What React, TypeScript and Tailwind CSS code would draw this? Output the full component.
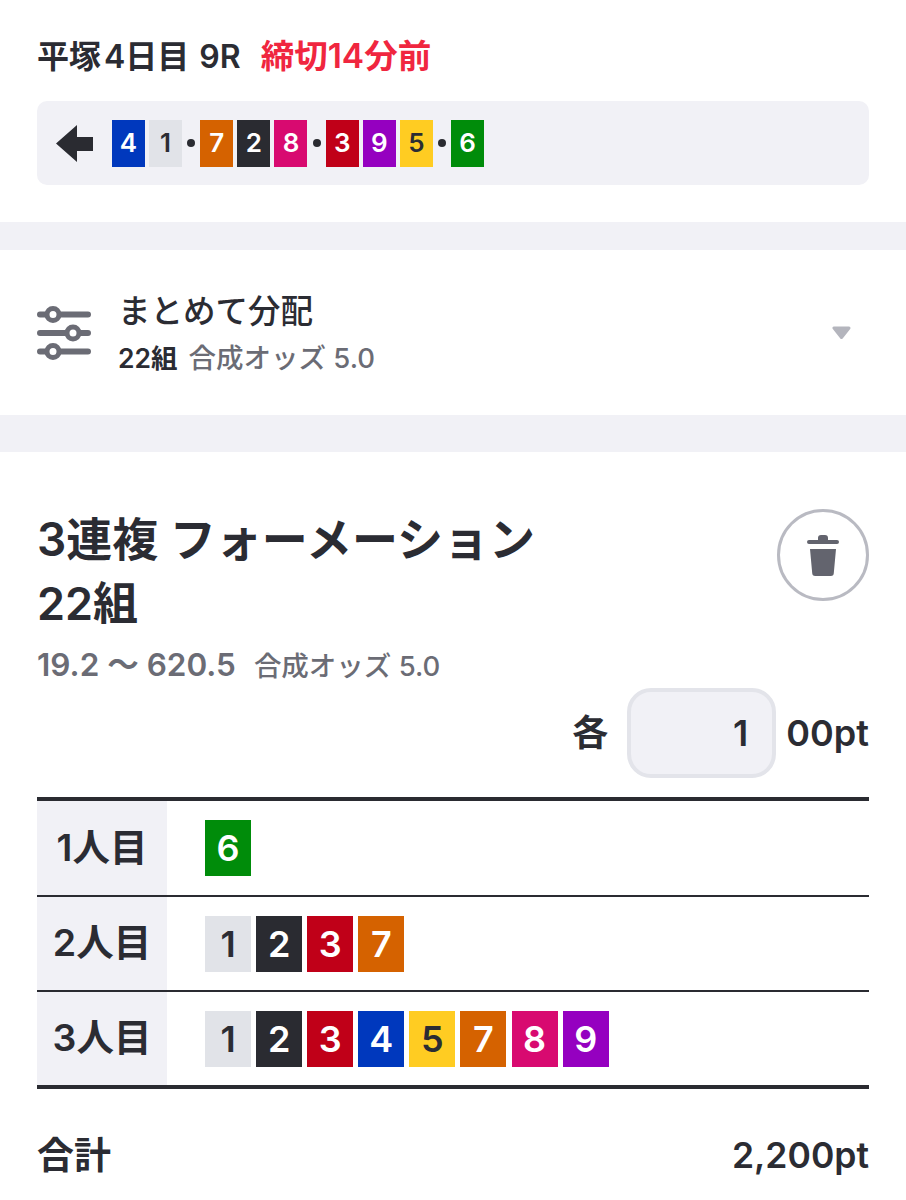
const COLORS: Record<string, string> = {
  "1": "bg-[#e1e3e8] text-[#2b2c33]",
  "2": "bg-[#2a2b31] text-white",
  "3": "bg-[#c00018] text-white",
  "4": "bg-[#0038bd] text-white",
  "5": "bg-[#ffcc22] text-[#2b2c33]",
  "6": "bg-[#008c0a] text-white",
  "7": "bg-[#d56200] text-white",
  "8": "bg-[#d80a70] text-white",
  "9": "bg-[#9500c0] text-white",
};

function SmallBadge({ n }: { n: string }) {
  return (
    <span className={`flex h-[47px] w-[33px] items-center justify-center text-[26px] font-semibold leading-none ${COLORS[n]}`}>
      {n}
    </span>
  );
}

function BigBadge({ n }: { n: string }) {
  return (
    <span className={`flex h-[56px] w-[46px] items-center justify-center text-[36px] font-semibold leading-none ${COLORS[n]}`}>
      {n}
    </span>
  );
}

function Dot() {
  return <span className="mx-[1px] h-[8px] w-[8px] rounded-full bg-[#2a2b31]" />;
}

function Row({ label, nums, tall }: { label: string; nums: string[]; tall?: boolean }) {
  return (
    <div className={`flex ${tall ? "h-[94px]" : "h-[93px]"}`}>
      <div className="flex w-[130px] items-center justify-center bg-[#f1f1f6] text-[37.500px] font-semibold text-[#2b2c33]">
        {label}
      </div>
      <div className="flex flex-1 items-center gap-[5.100px] pl-[38px]">
        {nums.map((n) => (
          <BigBadge key={n} n={n} />
        ))}
      </div>
    </div>
  );
}

function SlidersIcon() {
  return (
    <svg width="54" height="54" viewBox="0 0 54 54" className="text-[#6b6c75]">
      <path d="M3 8.500h48M3 27h48M3 45.500h48" fill="none" stroke="currentColor" strokeWidth="6" strokeLinecap="round" />
      <g fill="#fff" stroke="currentColor" strokeWidth="5">
        <circle cx="16" cy="8.500" r="6" />
        <circle cx="36" cy="27" r="6" />
        <circle cx="16" cy="45.500" r="6" />
      </g>
    </svg>
  );
}

export default function App() {
  return (
    <div className="h-[1200px] w-[906px] overflow-hidden bg-white text-[#2b2c33] font-['Inter','Noto_Sans_CJK_JP',sans-serif]">
      <div className="px-[37px]">
        <div className="flex h-[101px] items-center pt-[12px] text-[32px] font-semibold leading-none">
          <span>平塚</span>
          <span className="ml-[3px]">4日目</span>
          <span className="ml-[10px]">9R</span>
          <span className="ml-[20px] text-[33.500px] text-[#f0263f]">締切14分前</span>
        </div>
        <div className="flex h-[84px] items-center rounded-[10px] bg-[#f1f1f6] pl-[19px]">
          <svg width="37" height="37" viewBox="0 0 37 37" className="mr-[19px]">
            <path d="M0 18.500 21 0V12H37V26H21V37Z" fill="#2a2b31" />
          </svg>
          <div className="flex items-center gap-[4.100px]">
            <SmallBadge n="4" />
            <SmallBadge n="1" />
            <Dot />
            <SmallBadge n="7" />
            <SmallBadge n="2" />
            <SmallBadge n="8" />
            <Dot />
            <SmallBadge n="3" />
            <SmallBadge n="9" />
            <SmallBadge n="5" />
            <Dot />
            <SmallBadge n="6" />
          </div>
        </div>
      </div>

      <div className="mt-[37px] h-[28px] bg-[#f1f1f6]" />

      <div className="flex h-[165px] items-center pl-[37px] pr-[55px]">
        <SlidersIcon />
        <div className="ml-[27px] flex-1">
          <div className="text-[32.500px] font-medium leading-[40px]">まとめて分配</div>
          <div className="mt-[10px] flex items-baseline text-[26.500px] font-semibold leading-[32px]">
            <span>22組</span>
            <span className="ml-[11px] text-[27.500px] font-medium text-[#6b6c75]">合成オッズ 5.0</span>
          </div>
        </div>
        <svg width="19" height="13" viewBox="0 0 19 13">
          <path d="M2 2H17L9.500 11.500Z" fill="#b4b5bd" stroke="#b4b5bd" strokeWidth="3" strokeLinejoin="round" />
        </svg>
      </div>

      <div className="h-[37px] bg-[#f1f1f6]" />

      <div className="px-[37px]">
        <div className="flex justify-between pt-[54px]">
          <div>
            <div className="text-[46px] font-semibold leading-[66px]">3連複 フォーメーション</div>
            <div className="text-[45px] font-semibold leading-[64px]">22組</div>
          </div>
          <div className="mt-[3px] flex h-[92px] w-[92px] items-center justify-center rounded-full border-[3px] border-[#b9bac2]">
            <svg width="32" height="41" viewBox="0 0 32 41" fill="#63646e">
              <path d="M11 3a3 3 0 0 1 3-3h4a3 3 0 0 1 3 3v2h9a2 2 0 0 1 0 4H2a2 2 0 0 1 0-4h9Z" />
              <path d="M3 14h26l-2.200 24a3 3 0 0 1-3 3H8.200a3 3 0 0 1-3-3Z" />
            </svg>
          </div>
        </div>
        <div className="mt-[11px] flex items-baseline text-[#6b6c75]">
          <span className="text-[31.500px] font-semibold leading-[36px]">19.2 〜 620.5</span>
          <span className="ml-[18px] text-[27.500px] font-medium leading-[36px]">合成オッズ 5.0</span>
        </div>
        <div className="mt-[4px] flex items-center justify-end text-[36px] font-semibold leading-none">
          <span className="mr-[19px]">各</span>
          <div className="flex h-[90px] w-[149px] items-center justify-end rounded-[24px] border-[4px] border-[#e3e4ea] bg-[#f1f1f6] pr-[24px]">
            1
          </div>
          <span className="ml-[10px]">00pt</span>
        </div>

        <div className="mt-[19px] border-y-[4px] border-[#2a2b31]">
          <Row label="1人目" nums={["6"]} tall />
          <div className="h-[2px] bg-[#2a2b31]" />
          <Row label="2人目" nums={["1", "2", "3", "7"]} />
          <div className="h-[2px] bg-[#2a2b31]" />
          <Row label="3人目" nums={["1", "2", "3", "4", "5", "7", "8", "9"]} />
        </div>

        <div className="mt-[46px] flex items-center justify-between text-[35.500px] font-semibold leading-[42px]">
          <span className="text-[37px]">合計</span>
          <span>2,200pt</span>
        </div>
      </div>
    </div>
  );
}
